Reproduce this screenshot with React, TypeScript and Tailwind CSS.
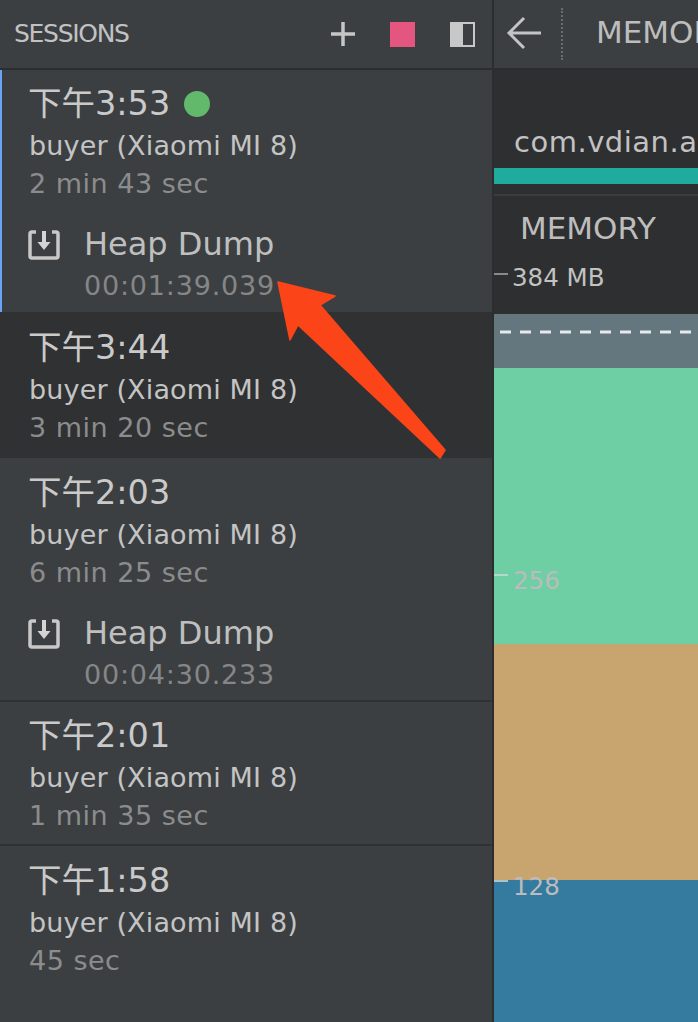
const font = { fontFamily: '"DejaVu Sans", "Noto Sans CJK SC", sans-serif' };

type Session = {
  time: string;
  duration: string;
  top: string;
  filler?: string;
  live?: boolean;
  selected?: boolean;
  active?: boolean;
  last?: boolean;
  dump?: string;
};

const sessions: Session[] = [
  { time: "下午3:53", duration: "2 min 43 sec", top: "mt-[16px]", live: true, active: true, dump: "00:01:39.039" },
  { time: "下午3:44", duration: "3 min 20 sec", top: "mt-[18px]", filler: "h-[11px]", selected: true },
  { time: "下午2:03", duration: "6 min 25 sec", top: "mt-[17px]", dump: "00:04:30.233" },
  { time: "下午2:01", duration: "1 min 35 sec", top: "mt-[16px]", filler: "h-[9px]" },
  { time: "下午1:58", duration: "45 sec", top: "mt-[17px]", filler: "h-[9px]", last: true },
];

const DumpIcon = () => (
  <svg width="32" height="32" viewBox="0 0 32 32" fill="none" className="shrink-0">
    <path d="M8 3H4a2 2 0 0 0-2 2v22a2 2 0 0 0 2 2h24a2 2 0 0 0 2-2V5a2 2 0 0 0-2-2h-4" stroke="#c8c8c8" strokeWidth="3.5" />
    <path d="M16 2v13" stroke="#d4d4d4" strokeWidth="4" />
    <path d="M9.5 13h13L16 21z" fill="#d4d4d4" />
  </svg>
);

const SessionRow = ({ s }: { s: Session }) => (
  <div
    className={`relative flex flex-col pl-[29px] ${s.selected ? "bg-[#2f3132]" : "bg-[#3c3f41]"} ${
      s.active || s.selected || s.last ? "" : "border-b-2 border-[#2f3132]"
    } ${s.active ? "pb-[1px]" : ""}`}
  >
    {s.active && <div className="absolute left-0 top-0 bottom-0 w-[2px] bg-[#6aa5f5]" />}
    <div className={`flex items-center h-[36px] ${s.top} text-[33.5px] text-[#cacaca] leading-none`}>
      <span className="-ml-[1px]">{s.time}</span>
      {s.live && <span className="ml-[14px] w-[26px] h-[26px] rounded-full bg-[#62b96b]" />}
    </div>
    <div className="h-[38px] mt-[5px] flex items-center text-[27px] text-[#c4c4c4] tracking-[0.15px] whitespace-nowrap">
      buyer (Xiaomi MI 8)
    </div>
    <div className="h-[38px] flex items-center text-[27px] text-[#8b8c8d] tracking-[0.5px]">{s.duration}</div>
    {s.dump ? (
      <div className="flex mt-[23px]">
        <div className="w-[56px] pt-[3px] -ml-[1px]">
          <DumpIcon />
        </div>
        <div className="flex flex-col">
          <div className="h-[36px] flex items-center text-[32px] text-[#bfbfbf]">Heap Dump</div>
          <div className="h-[49px] flex items-center text-[27px] text-[#858687] tracking-[0.8px]">{s.dump}</div>
        </div>
      </div>
    ) : (
      <div className={s.filler} />
    )}
  </div>
);

const Tick = ({ label, className }: { label: string; className: string }) => (
  <div className={`absolute left-0 flex items-start ${className}`}>
    <div className="w-[14px] h-[2px] bg-[#c8d8d4] opacity-80 mt-[5px]" />
    <span className="ml-[5px] text-[24.5px] leading-[24px] text-[#bcbcbc]">{label}</span>
  </div>
);

export default function App() {
  return (
    <div className="relative flex w-[698px] h-[1022px] overflow-hidden bg-[#3c3f41]" style={font}>
      <aside className="flex flex-col w-[494px] shrink-0 border-r-2 border-[#2b2d2e]">
        <header className="flex items-center h-[70px] pl-[14px] pr-[17px] border-b-2 border-[#2b2d2e] shrink-0">
          <span className="text-[25px] text-[#c2c2c2] tracking-[-1.3px]">SESSIONS</span>
          <div className="ml-auto flex items-center">
            <svg width="26" height="26" viewBox="0 0 26 26" className="mr-[34px]">
              <path d="M13 1v24M1 13h24" stroke="#c6c6c6" strokeWidth="3.5" />
            </svg>
            <div className="w-[25px] h-[25px] bg-[#e4557f] mr-[35px]" />
            <div className="w-[25px] h-[25px] border-[2.5px] border-[#c8c8c8] flex">
              <div className="w-1/2 bg-[#c8c8c8]" />
            </div>
          </div>
        </header>
        {sessions.map((s) => (
          <SessionRow key={s.time} s={s} />
        ))}
      </aside>

      <main className="flex flex-col flex-1 min-w-0 bg-[#2e2f30] overflow-hidden">
        <div className="flex items-center h-[70px] bg-[#3c3f41] border-b-2 border-[#2b2d2e] shrink-0">
          <svg width="36" height="34" viewBox="0 0 36 34" className="ml-[12px] -mt-[3px] shrink-0">
            <path d="M35 17H3M18 2 3 17l15 15" fill="none" stroke="#c4c4c4" strokeWidth="3" />
          </svg>
          <div className="ml-[19px] h-[52px] border-l-2 border-dotted border-[#6a6c6e] shrink-0" />
          <span className="ml-[33px] -mt-[3px] text-[31px] text-[#bdbdbd] whitespace-nowrap">MEMOR</span>
        </div>
        <div className="h-[98px] flex items-end pl-[20px] pb-[11px] text-[29px] tracking-[0.5px] leading-none text-[#c2c2c2] whitespace-nowrap shrink-0">
          com.vdian.a
        </div>
        <div className="h-[16px] bg-[#1fab9d] shrink-0" />
        <div className="h-[2px] mt-[10px] bg-[#3a3c3d] shrink-0" />
        <div className="h-[118px] shrink-0 pl-[26px] pt-[15px] relative">
          <div className="text-[31px] leading-[34px] text-[#bdbdbd]">MEMORY</div>
          <div className="absolute left-0 top-[68px] flex items-center">
            <div className="w-[14px] h-[2px] bg-[#8a8a8a] -mt-[8px]" />
            <span className="ml-[4px] text-[24.5px] leading-[28px] text-[#c2c2c2]">384 MB</span>
          </div>
        </div>
        <div className="relative flex flex-col flex-1">
          <div className="h-[54px] bg-[#64777f] shrink-0 pt-[16px]">
            <svg width="204" height="4" className="block">
              <line x1="6" y1="2" x2="204" y2="2" stroke="#e6eaec" strokeWidth="3" strokeDasharray="11 9" />
            </svg>
          </div>
          <div className="h-[276px] bg-[#6dcfa3] shrink-0" />
          <div className="h-[236px] bg-[#c8a46f] shrink-0" />
          <div className="flex-1 bg-[#357ba0]" />
          <Tick label="256" className="top-[255px]" />
          <Tick label="128" className="top-[561px]" />
        </div>
      </main>

      <svg width="180" height="190" viewBox="0 0 180 190" className="absolute left-[275px] top-[278px] pointer-events-none">
        <path
          d="M3 4 60 18 45 27 170 172 165 180 23 47 15 62Z"
          fill="#fb4519"
          stroke="#fb4519"
          strokeWidth="1.5"
          strokeLinejoin="round"
        />
      </svg>
    </div>
  );
}
